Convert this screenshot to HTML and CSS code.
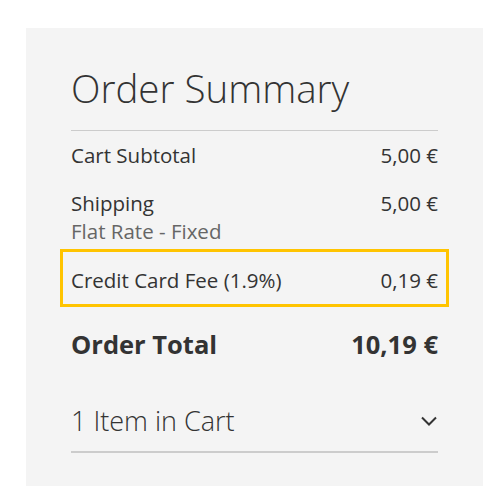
FILE: index.html
```html
<!DOCTYPE html>
<html>
<head>
<meta charset="utf-8">
<link rel="stylesheet" href="styles.css">
</head>
<body>
<div class="panel">
  <h1 class="title">Order Summary</h1>
  <div class="rows">
    <div class="row row-subtotal">
      <span class="label">Cart Subtotal</span>
      <span class="value">5,00 €</span>
    </div>
    <div class="row row-shipping">
      <div class="label-group">
        <span class="label">Shipping</span>
        <span class="sublabel">Flat Rate - Fixed</span>
      </div>
      <span class="value">5,00 €</span>
    </div>
    <div class="row row-fee">
      <span class="label">Credit Card Fee (1.9%)</span>
      <span class="value">0,19 €</span>
    </div>
    <div class="row row-total">
      <span class="label">Order Total</span>
      <span class="value">10,19 €</span>
    </div>
  </div>
  <div class="cart-toggle">
    <span class="cart-label">1 Item in Cart</span>
    <svg class="chevron" width="16" height="10" viewBox="0 0 16 10"><path d="M1 1.5 L8 8.5 L15 1.5" fill="none" stroke="#333" stroke-width="2"/></svg>
  </div>
</div>
</body>
</html>
```
FILE: styles.css
```css
html, body {
  margin: 0;
  padding: 0;
  background: #ffffff;
}
body {
  padding: 28px 0 0 26px;
  font-family: "Open Sans", "Liberation Sans", sans-serif;
  color: #333333;
}
.panel {
  box-sizing: border-box;
  width: 457px;
  height: 458px;
  background: #f4f4f4;
  padding: 36px 45px 0 45px;
}
.title {
  margin: 0;
  font-size: 38.5px;
  font-weight: 300;
  line-height: 48px;
  padding-bottom: 18px;
  border-bottom: 1px solid #cccccc;
}
.rows {
  display: flex;
  flex-direction: column;
}
.row {
  display: flex;
  justify-content: space-between;
  align-items: flex-start;
  font-size: 20.5px;
  line-height: 28px;
}
.row-subtotal {
  margin-top: 10px;
}
.row-shipping {
  margin-top: 20px;
}
.label-group {
  display: flex;
  flex-direction: column;
}
.sublabel {
  color: #666666;
}
.row-fee {
  margin: 4px -11px 0 -11px;
  border: 3px solid #ffc400;
  padding: 14px 8px 10px 8px;
}
.row-total {
  margin-top: 20px;
  font-size: 25.5px;
  font-weight: 700;
  line-height: 34px;
}
.cart-toggle {
  display: flex;
  justify-content: space-between;
  align-items: center;
  margin-top: 42px;
  padding-bottom: 12px;
  border-bottom: 2px solid #cccccc;
}
.cart-label {
  font-size: 27px;
  font-weight: 300;
  line-height: 36px;
}
.chevron {
  display: block;
  margin-right: 1px;
}
```
